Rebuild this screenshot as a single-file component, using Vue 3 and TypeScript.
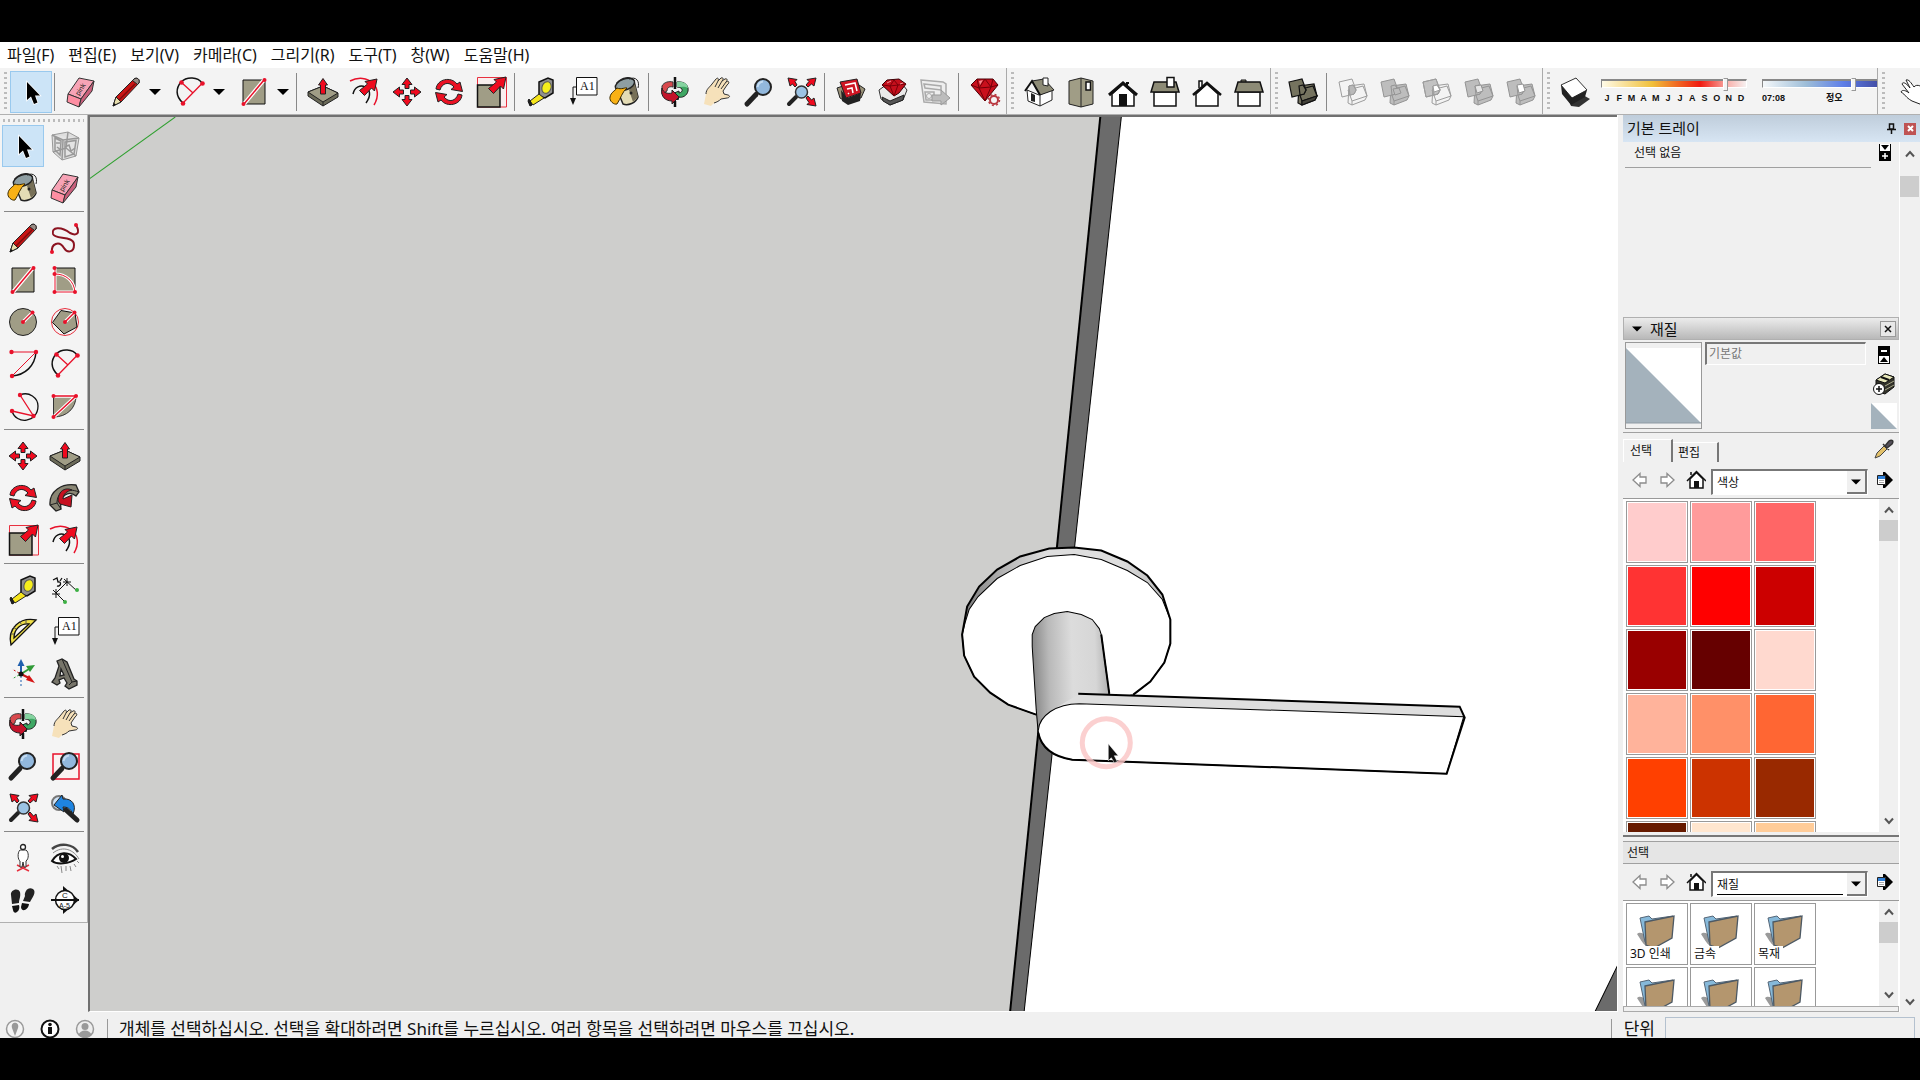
<script setup lang="ts">
import { ref } from 'vue'

interface Tool { icon: string; label: string; active?: boolean; menu?: boolean }

const menus: string[] = ['파일(F)', '편집(E)', '보기(V)', '카메라(C)', '그리기(R)', '도구(T)', '창(W)', '도움말(H)']

const t = (icon: string, label: string, extra: Partial<Tool> = {}): Tool => ({ icon, label, ...extra })

// Each band is a dockable toolbar, each inner list a group between separators.
const bands: Tool[][][] = [
  [
    [t('cursor', '선택', { active: true })],
    [t('eraser', '지우개'), t('pencil', '선', { menu: true }), t('arc2', '호', { menu: true }), t('rect', '직사각형', { menu: true })],
    [t('pushpull', '밀기/끌기'), t('offset', '오프셋'), t('move', '이동'), t('rotate', '회전'), t('scale', '배율')],
    [t('tape', '줄자'), t('label', '텍스트'), t('bucket', '페인트')],
    [t('orbit', '궤도'), t('hand', '이동 보기'), t('zoom', '확대/축소'), t('extents', '범위 확대')],
    [t('warehouse', '3D Warehouse'), t('extwarehouse', 'Extension Warehouse'), t('layout', 'LayOut')],
    [t('ruby', '확장 관리자')],
  ],
  [[t('iso', '등각'), t('top', '평면'), t('front', '정면'), t('right', '오른쪽'), t('back', '뒷면'), t('left', '왼쪽')]],
  [
    [t('shell', '외부 셸')],
    [t('intersect', '교차'), t('union', '결합'), t('subtract', '빼기'), t('trim', '다듬기'), t('split', '분할')],
  ],
]

const palette: Tool[][] = [
  [t('cursor', '선택', { active: true }), t('component', '구성요소'), t('bucket', '페인트'), t('eraser', '지우개')],
  [
    t('pencil', '선'), t('freehand', '자유곡선'), t('rect', '직사각형'), t('rotrect', '회전된 직사각형'), t('circle', '원'),
    t('polygon', '다각형'), t('arc', '호'), t('arc2', '2점 호'), t('arc3', '3점 호'), t('pie', '파이'),
  ],
  [t('move', '이동'), t('pushpull', '밀기/끌기'), t('rotate', '회전'), t('follow', '따라가기'), t('scale', '배율'), t('offset', '오프셋')],
  [t('tape', '줄자'), t('dimension', '치수'), t('protractor', '각도기'), t('label', '텍스트'), t('axes', '축'), t('text3d', '3D 텍스트')],
  [t('orbit', '궤도'), t('hand', '이동 보기'), t('zoom', '확대/축소'), t('zoomwin', '창 확대'), t('extents', '범위 확대'), t('previous', '이전')],
  [t('camera', '카메라 배치'), t('eye', '둘러보기'), t('feet', '걷기'), t('section', '단면')],
]

const months: string[] = [...'JFMAMJJASOND']
const month = ref(87)
const hour = ref(81)
const collection = ref('색상')
const folder = ref('재질')
const materialName = ref('기본값')

const swatches: string[] = [
  '#ffcccc', '#ff9b9b', '#ff6666', '#ff3333', '#ff0000', '#cc0000',
  '#990000', '#660000', '#ffd9cf', '#ffb39b', '#ff9068', '#ff6633',
  '#ff4000', '#cc3300', '#992900', '#661a00', '#ffe6cf', '#ffcc99',
]
const folders: string[] = ['3D 인쇄', '금속', '목재', '', '', '']
</script>

<template>
  <div class="app">
    <svg class="sprite" aria-hidden="true">
      <defs>
        <g id="arrow-up"><path d="M16 2 L21 8.500 H18 V12.500 H14 V8.500 H11 Z" fill="#f00a1e" stroke="#222" /></g>
        <g id="arrow-ne"><path d="M31 1 L28.500 13 L25.500 10 L18.500 17.500 L13.500 12.500 L21.500 6 L19 3.500 Z" fill="#f00a1e" stroke="#222" /></g>
        <g id="lens-big">
          <path d="M4 28 L13 18.500" stroke="#222" stroke-width="5" stroke-linecap="round" />
          <circle cx="20" cy="11" r="8" fill="#92b8dd" stroke="#222" stroke-width="2" />
          <path d="M14.500 11 C15 8 17 6 20 5.500" fill="none" stroke="#c4dcf2" stroke-width="2" />
        </g>
        <g id="boxes">
          <path d="M12 10 L27 8 L30 20 L28 24 L15 29 L11 27 Z" /><path d="M11 14 L26 10 L30 20 L15 25 Z M15 25 V29" />
          <path d="M2 6 L15 3 L19 14 L17 18 L5 21 Z" /><path d="M12 10 L16 9 L19 14 L17 18 L13 19 Z" />
        </g>
      </defs>
      <symbol id="i-cursor" viewBox="0 0 32 32"><path d="M12 6 V24 L16 20.500 L19 28 L22.500 26.500 L20 19.500 H25 Z" fill="#000" stroke="#fff" stroke-width="1.500" paint-order="stroke" /></symbol>
      <symbol id="i-component" viewBox="0 0 32 32">
        <g fill="none" stroke="#999"><path d="M3 5 L19 2 L30 8 L27 26 L13 30 L4 22 Z" fill="#dedede" /><path d="M3 5 L14 10 L30 8 M14 10 L13 30 M6 8 L12 11 L11 25 L6 20 Z M16 12 L27 10.500 L25 24 L16 27 Z" fill="#e4e4e4" stroke-width="1.500" /><path d="M4 22 L17 18 L27 26 M19 2 L17 18 M16 17 L20 15 L22 21 L26 18 M7 13 H11 M8 17 L12 20" stroke-width="1.500" /></g>
      </symbol>
      <symbol id="i-bucket" viewBox="0 0 32 32">
        <path d="M8 7 C13 1 22 0 25 5 L29 21 C27 27 19 30 14 28 L9 16 Z" fill="#e4dcb5" stroke="#222" stroke-width="1.500" />
        <path d="M20 14 L26 8 L29 21 L24 26 Z" fill="#777058" />
        <ellipse cx="16" cy="8.500" rx="10" ry="5.500" transform="rotate(-20 16 8.500)" fill="#8e9ea2" stroke="#222" stroke-width="1.500" />
        <path d="M8 12 C12 14 17 11 18 12 C13 16 12 22 8 28 C5 29 0 25 1 21 C2 16 6 15 8 12 Z" fill="#f9b115" stroke="#3b2a00" />
        <path d="M20 3 C27 0 31 5 29 12" fill="none" stroke="#222" /><circle cx="22" cy="17" r="1.500" fill="#222" />
      </symbol>
      <symbol id="i-eraser" viewBox="0 0 32 32">
        <path d="M14 2 L29 5 L16 23 L3 18 Z" fill="#f7a3b6" stroke="#333" /><path d="M3 18 L16 23 L14 31 L2 26 Z" fill="#fd8ea2" stroke="#333" /><path d="M29 5 L27 15 L14 31 L16 23 Z" fill="#c9607c" stroke="#333" />
        <text x="14" y="20" font-family="Liberation Sans" font-size="7" fill="#222" transform="rotate(-58 14 20)">pink</text>
      </symbol>
      <symbol id="i-pencil" viewBox="0 0 32 32">
        <path d="M3 30 L6 21 L24 3 C27 1 30 3 29 7 L11 26 Z" fill="#c81414" stroke="#222" /><path d="M3 30 L6 21 L11 26 Z" fill="#e8dfae" stroke="#222" /><path d="M3 30 L4 27 L6 28.500 Z" fill="#111" /><path d="M24 3 C27 1 30 3 29 7 L27.500 8.500 L22.500 4.500 Z" fill="#9a8d86" stroke="#222" /><path d="M9 24 L25 8" stroke="#7c0c0c" stroke-width="1.500" />
      </symbol>
      <symbol id="i-freehand" viewBox="0 0 32 32"><path d="M27 3 C32 12 27 14 21 11 C12 4 2 5 4 12 C6 18 25 13 25 23 C25 31 18 31 15 26 C10 18 2 22 3 30" fill="none" stroke="#8c1320" stroke-width="2" /><circle cx="27" cy="3" r="2" fill="#e8112a" /><circle cx="3" cy="30" r="2" fill="#e8112a" /></symbol>
      <symbol id="i-rect" viewBox="0 0 32 32"><path d="M5 4 H27 V28 H5 Z" fill="#a09d86" stroke="#111" /><path d="M6 28 L26 4" stroke="#fff" stroke-width="4" /><path d="M6 28 L26 4" stroke="#e8112a" stroke-width="1.500" /><circle cx="5.500" cy="28" r="2" fill="#e8112a" /><circle cx="26.500" cy="4" r="2" fill="#e8112a" /></symbol>
      <symbol id="i-rotrect" viewBox="0 0 32 32"><path d="M6 4 H26 V28 H6 Z" fill="#a09d86" stroke="#111" /><path d="M6 4 V28 H26 C25 17 17 10 6 10" fill="none" stroke="#fff" stroke-width="3" /><path d="M6 4 V28 H26 C25 17 17 10 6 10" fill="none" stroke="#e8112a" /><g fill="#e8112a"><circle cx="5.500" cy="4" r="2" /><circle cx="5.500" cy="10" r="2" /><circle cx="5.500" cy="28" r="2" /><circle cx="26" cy="28" r="2" /></g></symbol>
      <symbol id="i-circle" viewBox="0 0 32 32"><circle cx="16" cy="16" r="13.500" fill="#a09d86" stroke="#222" /><path d="M16 16 L25 7" stroke="#fff" stroke-width="3.500" /><path d="M16 16 L25 7" stroke="#e8112a" stroke-width="1.500" /><circle cx="16" cy="16" r="2" fill="#e8112a" /><circle cx="25.500" cy="6.500" r="2" fill="#e8112a" /></symbol>
      <symbol id="i-polygon" viewBox="0 0 32 32"><circle cx="16" cy="16" r="13.500" fill="none" stroke="#e8303f" /><path d="M12 4.500 L26 7 L28 21 L15 28 L3.500 16.500 Z" fill="#a09d86" stroke="#111" /><path d="M16 16 L25 7" stroke="#fff" stroke-width="3.500" /><path d="M16 16 L25 7" stroke="#e8112a" stroke-width="1.500" /><circle cx="16" cy="16" r="2" fill="#e8112a" /><circle cx="25.500" cy="6.500" r="2" fill="#e8112a" /></symbol>
      <symbol id="i-arc" viewBox="0 0 32 32"><path d="M29 4 C28 18 18 27 5 28" fill="none" stroke="#111" stroke-width="1.500" /><path d="M4.500 4 H29 L5 28" fill="none" stroke="#e8112a" /><g fill="#e8112a"><circle cx="4.500" cy="4" r="2.200" /><circle cx="29" cy="4" r="2.200" /><circle cx="5" cy="28" r="2.200" /></g></symbol>
      <symbol id="i-arc2" viewBox="0 0 32 32"><path d="M9 27 C1 20 2 12 7 6 C13 0 24 1 28 7" fill="none" stroke="#111" stroke-width="1.500" /><path d="M9 27 L28.500 7 M7.500 6.500 L19 17" fill="none" stroke="#e8112a" stroke-width="1.300" /><g fill="#e8112a"><circle cx="7.500" cy="6.500" r="2.300" /><circle cx="28.500" cy="7.500" r="2.300" /><circle cx="9" cy="27.500" r="2.300" /></g></symbol>
      <symbol id="i-arc3" viewBox="0 0 32 32"><path d="M13 5 C22 1 31 8 31 16 C31 33 9 35 5 21" fill="none" stroke="#111" stroke-width="1.300" /><path d="M13 5 L26.500 26 L5 21" fill="none" stroke="#e8112a" stroke-width="1.300" /><g fill="#e8112a"><circle cx="13" cy="5" r="2.200" /><circle cx="5" cy="21" r="2.200" /><circle cx="26.500" cy="26" r="2.200" /></g></symbol>
      <symbol id="i-pie" viewBox="0 0 32 32"><path d="M4.500 6 H27 C27 18 18 27 4.500 27 Z" fill="#a09d86" stroke="#333" /><path d="M4.500 6 H27 L4.500 27" fill="none" stroke="#fff" stroke-width="3.500" /><path d="M4.500 6 H27 L4.500 27" fill="none" stroke="#e8112a" stroke-width="1.500" /><g fill="#e8112a"><circle cx="4.500" cy="6" r="2" /><circle cx="27" cy="6" r="2" /><circle cx="4.500" cy="27" r="2" /></g></symbol>
      <symbol id="i-move" viewBox="0 0 32 32"><use href="#arrow-up" /><use href="#arrow-up" transform="rotate(90 16 16)" /><use href="#arrow-up" transform="rotate(180 16 16)" /><use href="#arrow-up" transform="rotate(270 16 16)" /></symbol>
      <symbol id="i-pushpull" viewBox="0 0 32 32"><path d="M1 16 L16 10 L31 17 V21 L16 30 L1 20 Z" fill="#6b6a58" stroke="#222" /><path d="M1 16 L16 10 L31 17 L16 26 Z" fill="#a09d86" stroke="#222" /><path d="M16 26 V30" stroke="#222" /><path d="M16 2.500 L20.500 9 H18.500 V18 H13.500 V9 H11.500 Z" fill="#f00a1e" stroke="#222" /></symbol>
      <symbol id="i-rotate" viewBox="0 0 32 32"><g id="rot-half"><path d="M3 13 C4 3 18 0 24 8 L27 6 L29.500 15.500 L18 13.500 L21 11 C16 5 9 7 7 14 Z" fill="#ea1022" stroke="#222" /></g><use href="#rot-half" transform="rotate(180 16 16)" /></symbol>
      <symbol id="i-follow" viewBox="0 0 32 32"><path d="M1 23 C0 9 13 1 27 3 L30 10 L27 14 C20 8 10 13 12 27 L7 29 Z" fill="#8a8775" stroke="#222" stroke-width="1.300" /><path d="M1 23 L8 21 L12 27 M8 21 C8 10 17 5 30 10" fill="none" stroke="#222" /><path d="M9 19 C9 8 17 5 23 8 C18 9 14 12 14 17 L23 13 L22 25 L11 22 Z" fill="#c71020" stroke="#222" /></symbol>
      <symbol id="i-scale" viewBox="0 0 32 32"><path d="M2.500 1.500 H31.500 V31 H2.500 Z" fill="#f9eeee" stroke="#e8303f" /><path d="M2.500 9 H25 V31 H2.500 Z" fill="#a09d86" stroke="#111" stroke-width="1.500" /><use href="#arrow-ne" /></symbol>
      <symbol id="i-offset" viewBox="0 0 32 32"><path d="M1 5 C18 -4 36 11 25 29" fill="none" stroke="#e8112a" stroke-width="1.500" /><path d="M4 18 C7 3 29 11 17 27" fill="none" stroke="#111" stroke-width="1.500" /><use href="#arrow-ne" transform="translate(-3 2)" /></symbol>
      <symbol id="i-tape" viewBox="0 0 32 32"><path d="M14 6 L23 2 L28 4 L28 17 L20 22 L14 20 Z" fill="#8f8f8f" stroke="#111" stroke-width="1.500" /><ellipse cx="21.500" cy="11.500" rx="4.500" ry="6" transform="rotate(20 21.500 11.500)" fill="#f6ee1c" stroke="#555" /><path d="M14 18 L19 22 L8 29 L5 25 Z" fill="#f6e51b" stroke="#222" /><path d="M4 23 L7 29 L5 30 L3 25 Z" fill="#222" stroke="#111" /></symbol>
      <symbol id="i-dimension" viewBox="0 0 32 32"><path d="M7 19 L18 8" stroke="#111" /><path d="M4 16 L16 28 M15 5 L28 17 M3 20 H11 M7 15 V24 M14 8 H22 M18 4 V12" stroke="#111" /><circle cx="16" cy="28" r="2" fill="#3cb043" /><circle cx="28" cy="16" r="2" fill="#3cb043" /><path d="M4 6 L8 4 L9 8 C13 7 12 13 8 12 M11 7 L13 4" fill="none" stroke="#111" stroke-width="1.300" /></symbol>
      <symbol id="i-protractor" viewBox="0 0 32 32"><path fill-rule="evenodd" d="M29 4 L4 29 C0 12 13 1 29 4 Z M22 8 L7 22 C7 13 14 7 22 8 Z" fill="#efdf48" stroke="#111" stroke-width="1.300" /><path d="M7 18 L4 18 M9 13 L6 11 M14 8 L13 5 M19 7 V4" stroke="#555" /></symbol>
      <symbol id="i-label" viewBox="0 0 32 32"><path d="M9.500 1.500 H30 V19 H9.500 Z" fill="#fff" stroke="#111" /><text x="13" y="14" font-family="Liberation Serif" font-size="12" fill="#111">A1</text><path d="M9 11 H6 V26" fill="none" stroke="#111" /><path d="M3 22 H9 L6 29 Z" fill="#111" /></symbol>
      <symbol id="i-axes" viewBox="0 0 32 32"><path d="M14 16 V6" stroke="#1f5fae" stroke-width="2" /><path d="M10.500 8 L14 1 L17.500 8 Z" fill="#1f5fae" /><path d="M14 16 L22 11" stroke="#2f9a36" stroke-width="2" /><path d="M19 8 L28 7 L23 14 Z" fill="#2f9a36" /><path d="M14 16 L22 20" stroke="#c81414" stroke-width="2" /><path d="M22 17 L28 25 L19 22 Z" fill="#d61616" /><path d="M14 18 V28" stroke="#1f5fae" stroke-dasharray="2 2" /><path d="M12 17 L5 21" stroke="#2f9a36" stroke-dasharray="2 2" /><path d="M12 15 L5 11" stroke="#c81414" stroke-dasharray="2 2" /><circle cx="14" cy="16" r="2.500" fill="#111" /></symbol>
      <symbol id="i-text3d" viewBox="0 0 32 32"><path fill-rule="evenodd" d="M8 3 L13 1 L18 4 L25 21 L28 23 V27 L20 31 L16 28 L18 25 L15 20 L10 22 L11 25 L8 27 L3 24 L6 20 L10 8 Z M12 11 L11 18 L15 17 Z" fill="#77756a" stroke="#222" stroke-width="1.300" /><path d="M13 1 L23 24 L28 23 M23 24 L20 27" fill="none" stroke="#222" /></symbol>
      <symbol id="i-orbit" viewBox="0 0 32 32"><path d="M3 10 C5 6 10 5 14 6 V11 C10 10 8 12 8 15 L3 18 Z" fill="#d8494d" stroke="#333" /><path d="M18 6 C26 5 30 10 29 15 C28 20 23 22 20 21 L19 24 L13 18 L20 15 V17 C25 16 24 11 18 11 Z" fill="#3ea763" stroke="#222" /><path d="M18 6 C24 5 29 8 29 12 C26 10 22 11 18 11 Z" fill="#85d3a0" /><path d="M3 12 C4 17 9 18 13 17 V14 L20 21 L13 28 V25 C7 25 1 21 3 12 Z" fill="#c3132a" stroke="#222" /><path d="M16 1 V13 M16 25 V31" stroke="#111" stroke-width="2.500" /></symbol>
      <symbol id="i-hand" viewBox="0 0 32 32"><path d="M3 28 L5 18 C5 13 9 11 11 8 L15 3 C17 1 18 3 17 5 L20 2 C22 1 23 3 21 5 L24 3 C26 2 27 4 25 6 L27 5 C29 5 28 8 26 9 L22 15 L23 18 L27 19 C30 20 28 22 26 22 L20 23 C17 26 13 26 10 30 Z" fill="#f6e1ba" stroke="none" /><path d="M5 18 C5 13 9 11 11 8 L15 3 C17 1 18 3 17 5 L14 11 M17 5 L20 2 C22 1 23 3 21 5 L17 12 M21 5 L24 3 C26 2 27 4 25 6 L20 13 M25 6 C28 4 29 7 26 9 L22 15 L23 18 L27 19 C30 20 28 22 26 22 L20 23 C18 25 16 26 13 27" fill="none" stroke="#333" /></symbol>
      <symbol id="i-zoom" viewBox="0 0 32 32"><use href="#lens-big" /></symbol>
      <symbol id="i-zoomwin" viewBox="0 0 32 32"><path d="M4 4 H30 V29 H4 Z" fill="#faf2f2" stroke="#e8112a" stroke-width="1.500" /><use href="#lens-big" /></symbol>
      <symbol id="i-extents" viewBox="0 0 32 32"><path d="M4 28 L11 21" stroke="#222" stroke-width="4" stroke-linecap="round" /><circle cx="16.500" cy="16" r="6" fill="#9cc3e4" stroke="#333" stroke-width="1.500" /><g fill="#f00a1e" stroke="#222"><path d="M31 2 L29 10 L26.500 8 L23 11 L21 9 L24 5.500 L22 3.500 Z" /><path d="M3 2 L5 10 L7.500 8 L10 11 L12 9 L10 5.500 L12 3.500 Z" /><path d="M31 30 L29 22 L26.500 24 L23 20 L21 22 L24 26.500 L22 28.500 Z" /></g></symbol>
      <symbol id="i-previous" viewBox="0 0 32 32"><circle cx="10" cy="11" r="7" fill="#cfe2f4" stroke="#777" stroke-width="2" /><path d="M17 18 L28 28" stroke="#222" stroke-width="5" stroke-linecap="round" /><path d="M5 13 L13 3 L14 7 C23 6 28 13 24 22 C21 16 18 15 14 15 L15 20 Z" fill="#1f84e0" stroke="#222" /></symbol>
      <symbol id="i-camera" viewBox="0 0 32 32"><path d="M10 29 L22 23 M10 23 L22 29 M16 22 V27" stroke="#e8303f" stroke-width="1.500" /><path d="M13 8 C10 11 11 18 13 19 V25 H15 L16 20 L17 25 H19 V19 C22 17 22 10 19 8 Z" fill="#fff" stroke="#333" /><circle cx="16" cy="5" r="2.500" fill="#fff" stroke="#222" stroke-width="1.300" /></symbol>
      <symbol id="i-eye" viewBox="0 0 32 32"><path d="M3 7 C11 0 24 2 29 10" fill="none" stroke="#444" stroke-width="2.500" /><path d="M3 19 C9 9 20 9 27 17 C20 22 8 23 3 19 Z" fill="#fff" stroke="#111" stroke-width="2" /><circle cx="15" cy="16" r="5" fill="#111" /><circle cx="13.500" cy="14.500" r="1.500" fill="#fff" /><path d="M4 11 C14 3 25 8 30 17 M8 24 L10 27 M12 24 L13 31 M17 24 V29 M21 24 L22 29 M25 22 L27 25 M28 19 L30 21" fill="none" stroke="#888" /></symbol>
      <symbol id="i-feet" viewBox="0 0 32 32"><path d="M4 11 C3 6 11 3 13 8 C14 13 12 15 12 19 L5 20 Z M18 12 C17 8 21 2 26 5 C30 8 25 14 23 18 L16 17 Z" fill="#222" /><path d="M5 22 L12 21 C14 27 7 32 6 26 Z M15 19 L22 20 C21 27 14 28 14 23 Z" fill="#111" /></symbol>
      <symbol id="i-section" viewBox="0 0 32 32"><path d="M14 2 L30 16 L14 30 Z" fill="#111" /><circle cx="16" cy="16" r="9.500" fill="#fff" stroke="#111" stroke-width="1.500" /><path d="M2 16 H30" stroke="#111" stroke-width="2" /><text x="13" y="14" font-family="Liberation Sans" font-size="8" fill="#111">C</text><text x="10" y="24" font-family="Liberation Sans" font-size="7" fill="#111">A-5</text></symbol>
      <symbol id="i-warehouse" viewBox="0 0 32 32"><path d="M2 12 L8 10 L10 25 L5 22 Z M24 9 L30 13 L26 22 L23 22 Z" fill="#9a9279" stroke="#222" /><path d="M6 14 L12 22 L26 17 L25 25 L13 29 L7 25 Z" fill="#222" /><path d="M5 6 L22 3 L26 17 L11 22 Z" fill="#cf1523" stroke="#222" /><path d="M10 9 L20 7 L22 15 M12 13 L17 12 L18 17 M13 17 L14 18" fill="none" stroke="#fff" stroke-width="1.500" /></symbol>
      <symbol id="i-extwarehouse" viewBox="0 0 32 32"><path d="M2 14 L9 9 L26 9 L30 14 L26 24 L13 29 L4 23 Z" fill="#e9e9e9" stroke="#333" /><path d="M5 21 L13 25 L27 19 L26 24 L13 29 L6 25 Z" fill="#555" stroke="#222" /><path d="M5 9 L10 4 L22 3 L29 8 L22 17 L17 20 Z" fill="#c40f1c" stroke="#3a0005" /><path d="M5 9 L13 10 L29 8 M13 10 L17 20 L21 9 L17 4 L13 10" fill="none" stroke="#7a0008" /><path d="M10 7 L14 5 M23 8 L26 7" stroke="#f0969c" /></symbol>
      <symbol id="i-layout" viewBox="0 0 32 32"><path d="M2 4 L24 6 L27 8 V28 L5 26 Z" fill="#eee" stroke="#aaa" stroke-width="1.500" /><path d="M5 8 L22 10 V14 L6 12 Z M6 16 H15 V24 H7 Z" fill="none" stroke="#aaa" stroke-width="1.500" /><circle cx="10" cy="20" r="2.500" fill="none" stroke="#aaa" /><path d="M13 19 H22 V14 L31 22 L22 29 V25 H13 Z" fill="#bcbcbc" stroke="#999" /></symbol>
      <symbol id="i-ruby" viewBox="0 0 32 32"><path d="M2 9 L8 3 H24 L29 9 L16 25 Z" fill="#c90f1c" stroke="#4a0006" /><path d="M2 9 L10 12 L22 11 L29 9 M8 3 L10 12 L16 25 L22 11 L24 3 M10 12 L16 3 L22 11" fill="none" stroke="#720008" /><path d="M10 5 L14 4 L11 9 Z" fill="#f58a90" /><circle cx="25" cy="24" r="4" fill="#f4f4f4" stroke="#b93840" stroke-width="2" /><circle cx="25" cy="24" r="5.500" fill="none" stroke="#b93840" stroke-width="1.500" stroke-dasharray="2 2.300" /></symbol>
      <symbol id="i-iso" viewBox="0 0 32 32"><path d="M4 14 L16 19 L29 14 V24 L17 30 L5 25 Z" fill="#fff" stroke="#222" /><path d="M17 19 V30" stroke="#222" /><path d="M8 17 L12 19 V26 L8 25 Z" fill="#222" /><path d="M9 5 L21 3 L31 14 L17 19 Z" fill="#8d8b76" stroke="#222" /><path d="M2 15 L9 5 L17 19" fill="none" stroke="#111" stroke-width="2" /><path d="M20 9 V2 H25 V10 Z" fill="#fff" stroke="#222" /></symbol>
      <symbol id="i-top" viewBox="0 0 32 32"><path d="M4 5 L16 2 L28 5 V28 L16 31 L4 28 Z" fill="#a09d86" stroke="#222" /><path d="M16 2 V31" stroke="#222" /><path d="M21 6 H25.500 V14 H21 Z" fill="#fff" stroke="#111" stroke-width="1.500" /></symbol>
      <symbol id="i-front" viewBox="0 0 32 32"><path d="M20 12 V7 H22" fill="none" stroke="#111" stroke-width="2" /><path d="M5 18 V30 H27 V18 L16 8 Z" fill="#fff" stroke="#111" stroke-width="1.500" /><path d="M2 19 L16 7 L30 19" fill="none" stroke="#111" stroke-width="3" /><path d="M12 18 H20 V30 H12 Z" fill="#111" /></symbol>
      <symbol id="i-right" viewBox="0 0 32 32"><path d="M5 16 H27 V30 H5 Z" fill="#fff" stroke="#111" stroke-width="1.500" /><path d="M5 6 H27 L30 16 H2 Z" fill="#8d8b76" stroke="#111" stroke-width="1.500" /><path d="M18 1.500 H25 V11 H18 Z" fill="#fff" stroke="#111" stroke-width="1.500" /></symbol>
      <symbol id="i-back" viewBox="0 0 32 32"><path d="M8 12 V5 H11 V10" fill="#fff" stroke="#111" stroke-width="1.500" /><path d="M5 18 V30 H27 V18 L16 8 Z" fill="#fff" stroke="#111" stroke-width="1.500" /><path d="M2 19 L16 7 L30 19" fill="none" stroke="#111" stroke-width="2.500" /></symbol>
      <symbol id="i-left" viewBox="0 0 32 32"><path d="M8 6 V4 H13 V6" fill="#8d8b76" stroke="#111" /><path d="M5 16 H27 V30 H5 Z" fill="#fff" stroke="#111" stroke-width="1.500" /><path d="M5 6 H27 L30 16 H2 Z" fill="#8d8b76" stroke="#111" stroke-width="1.500" /></symbol>
      <symbol id="i-shell" viewBox="0 0 32 32"><g fill="#75735f" stroke="#111" stroke-width="1.200"><use href="#boxes" /><path d="M15 25 L30 20 L28 24 L15 29 Z" fill="#44433a" /></g></symbol>
      <symbol id="i-intersect" viewBox="0 0 32 32"><g fill="none" stroke="#9d9d9d"><use href="#boxes" /><path d="M12 10 L16 9 L19 14 L17 18 L13 19 Z" fill="#b9b9b9" /></g></symbol>
      <symbol id="i-union" viewBox="0 0 32 32"><g fill="#bdbdbd" stroke="#949494"><use href="#boxes" /><path d="M14 13 L20 12 L22 17 L16 19 Z" /></g></symbol>
      <symbol id="i-subtract" viewBox="0 0 32 32"><g stroke="#9d9d9d"><path d="M2 6 L15 3 L19 14 L17 18 L5 21 Z" fill="#c2c2c2" /><g fill="none"><use href="#boxes" /></g><path d="M12 10 L16 9 L19 14 L13 16 Z" fill="#fff" /></g></symbol>
      <symbol id="i-trim" viewBox="0 0 32 32"><g fill="#bdbdbd" stroke="#949494"><use href="#boxes" /><path d="M12 10 L18 9 L20 15 L14 17 Z" fill="#e6e6e6" /></g></symbol>
      <symbol id="i-split" viewBox="0 0 32 32"><g fill="#bdbdbd" stroke="#949494"><use href="#boxes" /><path d="M12 9 L18 8 L20 15 L14 17 Z" fill="#fff" /></g></symbol>
      <symbol id="i-shadow" viewBox="0 0 32 32"><path d="M8 20 L12 30 L20 31 L31 23 L24 19 Z" fill="#333" /><path d="M2 9 L17 2 L28 14 L13 22 Z" fill="#fff" stroke="#333" /><path d="M2 9 L13 22 L12 29 L3 18 Z M13 22 L28 14 L26 21 L12 29 Z" fill="#222" /></symbol>
      <symbol id="i-point" viewBox="0 0 32 32"><path d="M12 25 C5 21 6 19 1 16 C2 13 7 15 9 17 L2 8 C3 5 7 8 10 12 L6 4 C9 3 11 7 14 11 C17 7 23 11 25 14 V30 L12 25" fill="#fff" stroke="#222" /></symbol>
      <symbol id="i-home" viewBox="0 0 20 20"><path d="M4 9 V18 H17 V9 L10.500 2.500 Z" fill="#fff" stroke="#111" stroke-width="1.500" /><path d="M1 11 L10.500 1.500 L20 11 M5 5 V2" fill="none" stroke="#111" stroke-width="1.500" /><path d="M8 11 H13 V18 H8 Z" fill="#111" /></symbol>
      <symbol id="i-prev" viewBox="0 0 16 16"><path d="M1 8 L8 1.500 V5 H14 V11 H8 V14.500 Z" fill="#fff" stroke="#8c8c8c" stroke-width="1.300" /></symbol>
      <symbol id="i-details" viewBox="0 0 18 18"><path d="M7 1 H9 L17 9 L9 17 H7 Z" fill="#000" /><path d="M1.500 4.500 H9.500 V13.500 H1.500 Z" fill="#fff" stroke="#222" /><path d="M2 5 H9 V8 H2 Z" fill="#2f80d8" /><path d="M3 9.500 H8 M3 11.500 H8" stroke="#aaa" /></symbol>
      <symbol id="i-dropper" viewBox="0 0 20 20"><path d="M1 19 L3 14 L10 7 L13 10 L6 17 Z" fill="#e3c16a" stroke="#444" /><path d="M9 5 L15 11 M11 7 L15 2 C18 0 20 2 18 5 L13 9 Z" fill="#55505a" stroke="#333" stroke-width="1.500" /></symbol>
      <symbol id="i-create" viewBox="0 0 22 22"><path d="M3 7 L12 1 L21 4 V14 L12 21 L3 18 Z" fill="#33332b" stroke="#111" /><path d="M3 7 L12 1 L21 4 L12 10 Z" fill="#e6e6b8" stroke="#111" /><path d="M8 4 L16 7" stroke="#111" stroke-width="2" /><path d="M12 13 L21 8 M12 17 L21 12" stroke="#aaa98a" /><circle cx="6" cy="16" r="5.500" fill="#fff" stroke="#111" /><path d="M6 13 V19 M3 16 H9" stroke="#111" stroke-width="1.500" /></symbol>
      <symbol id="i-folder" viewBox="0 0 40 36"><path d="M1 20 C4 17 8 20 10 22 V32 C6 29 4 24 1 20 Z" fill="#9a9a9a" /><path d="M4 4 L13 2 L16 5 L37 2 L12 31 L9 28 Z" fill="#86b9da" stroke="#567" /><path d="M9 8 L38 2 L36 24 L18 34 L10 31 Z" fill="#b4966e" stroke="#4d5964" stroke-width="1.300" /></symbol>
      <symbol id="i-chev" viewBox="0 0 10 8"><path d="M1 6.500 L5 2 L9 6.500" fill="none" stroke="#555" stroke-width="2" /></symbol>
      <symbol id="i-down" viewBox="0 0 12 8"><path d="M0 1 H12 L6 7 Z" fill="#000" /></symbol>
    </svg>

    <nav class="menubar">
      <button v-for="m in menus" :key="m" type="button" class="menu">{{ m }}</button>
    </nav>

    <header class="toolbar">
      <div v-for="(band, b) in bands" :key="b" class="band">
        <i class="grip"></i>
        <template v-for="(group, g) in band" :key="g">
          <i v-if="g > 0" class="sep"></i>
          <template v-for="tool in group" :key="tool.icon">
            <span v-if="tool.menu" class="split">
              <button type="button" class="tool" :aria-label="tool.label"><svg class="icon"><use :href="'#i-' + tool.icon" /></svg></button>
              <button type="button" class="drop" :aria-label="tool.label + ' 메뉴'"><svg class="tri"><use href="#i-down" /></svg></button>
            </span>
            <button v-else type="button" class="tool" :class="{ active: tool.active }" :aria-label="tool.label"><svg class="icon"><use :href="'#i-' + tool.icon" /></svg></button>
          </template>
        </template>
      </div>
      <div class="band">
        <i class="grip"></i>
        <button type="button" class="tool" aria-label="그림자"><svg class="icon"><use href="#i-shadow" /></svg></button>
        <div class="slider date">
          <input v-model="month" type="range" min="0" max="100" aria-label="날짜" />
          <div class="ticks"><span v-for="(m, i) in months" :key="i">{{ m }}</span></div>
        </div>
        <div class="slider time">
          <input v-model="hour" type="range" min="0" max="100" aria-label="시간" />
          <div class="hours"><span>07:08</span><span>정오</span></div>
        </div>
      </div>
      <div class="band last">
        <i class="grip"></i>
        <button type="button" class="tool" aria-label="상호 작용"><svg class="icon"><use href="#i-point" /></svg></button>
      </div>
    </header>

    <div class="work">
      <aside class="left">
        <div class="palette">
          <i class="hgrip"></i>
          <template v-for="(group, g) in palette" :key="g">
            <i v-if="g > 0" class="hsep"></i>
            <div class="group">
              <button v-for="tool in group" :key="tool.icon" type="button" class="tool" :class="{ active: tool.active }" :aria-label="tool.label"><svg class="icon"><use :href="'#i-' + tool.icon" /></svg></button>
            </div>
          </template>
        </div>
      </aside>

      <main class="viewport">
        <svg class="scene" viewBox="90 118 1527 893" preserveAspectRatio="xMidYMid slice">
          <defs>
            <linearGradient id="stalk" x1="0" x2="1" y1="0.050" y2="0"><stop offset="0" stop-color="#8a8a8a" /><stop offset="0.200" stop-color="#b9b9b9" /><stop offset="0.500" stop-color="#dcdcdc" /><stop offset="0.800" stop-color="#d6d6d6" /><stop offset="1" stop-color="#a9a9a9" /></linearGradient>
            <linearGradient id="rim" x1="0" x2="1"><stop offset="0" stop-color="#777" /><stop offset="0.200" stop-color="#b5b5b5" /><stop offset="0.400" stop-color="#dedede" /><stop offset="0.750" stop-color="#dedede" /><stop offset="1" stop-color="#b8b8b8" /></linearGradient>
          </defs>
          <rect x="90" y="118" width="1527" height="893" fill="#fff" />
          <path d="M90 118 H1100 L1010 1011 H90 Z" fill="#cececc" />
          <path d="M1100 118 H1121 L1024 1011 H1010 Z" fill="#6b6b6b" />
          <path d="M1100 118 L1010 1011" stroke="#000" stroke-width="2" />
          <path d="M1121 118 L1024 1011" stroke="#000" stroke-width="1" />
          <path d="M90 180 L176 118" stroke="#2fa02f" stroke-width="1" />
          <path d="M1618 963 L1594 1012 H1618 Z" fill="#6b6b6b" stroke="#000" />
          <path d="M1049 549 L1074 548 L1101 551 L1127 562 L1147 576 L1162 595 L1170 620 V644 L1164 663 L1150 682 L1133 695 L1036 715 L1008 705 L990 693 L974 677 L964 656 L962 635 L967 607 L979 587 L997 570 L1020 557 Z" fill="url(#rim)" />
          <path d="M1170 620 V644 L1164 663 L1150 682 L1133 695 L1036 715 L1008 705 L990 693 L974 677 L964 656 L962 635 L965 623 L969 610 L978 597 L997 579 L1020 566 L1047 557 L1074 555 L1101 560 L1127 571 L1147 583 L1162 600 Z" fill="#fff" stroke="#000" stroke-width="1" />
          <path d="M1133 695 L1150 682 L1164 663 L1170 644 V620 L1162 595 L1147 576 L1127 562 L1101 551 L1074 548 L1049 549 L1020 557 L997 570 L979 587 L967 607 L962 635 L964 656 L974 677 L990 693 L1008 705 L1036 715" fill="none" stroke="#000" stroke-width="2" />
          <path d="M1038 733 L1036 710 L1032 647 V635 L1035 627 L1044 618 L1054 614 L1067 612 L1081 615 L1092 620 L1099 629 L1101 635 L1109 694 L1079 710 Z" fill="url(#stalk)" stroke="#000" stroke-width="1" />
          <path d="M1101 635 L1109 694" fill="none" stroke="#000" stroke-width="2" />
          <path d="M1079 694 L1459 707 L1464 719 L1079 705 L1056 708 Z" fill="#dedede" />
          <path d="M1079 704 L1463 717 L1446 774 L1072 760 C1060 758 1040 752 1038 731 C1039 716 1056 704 1079 704 Z" fill="#fff" stroke="#000" stroke-width="1" />
          <path d="M1078 694 L1459 707 L1464 718 L1446 774 L1072 760 C1060 758 1042 752 1038 733" fill="none" stroke="#000" stroke-width="2" />
          <circle cx="1106" cy="743" r="24" fill="none" stroke="#fac4c4" stroke-opacity="0.800" stroke-width="5" />
          <path d="M1108 744 V761 L1111 758 L1114 763 L1117 762 L1114 756 H1118 Z" fill="#111" stroke="#fff" stroke-width="0.500" />
        </svg>
      </main>

      <aside class="tray">
        <div class="tray-title">
          <h2>기본 트레이</h2>
          <button type="button" class="pin" aria-label="고정"><svg width="9" height="11" viewBox="0 0 9 11"><path d="M2.500 1 H6.500 V6 H2.500 Z M0 6.500 H9 M4.500 7 V11" fill="none" stroke="#111" stroke-width="1.500" /></svg></button>
          <button type="button" class="close" aria-label="닫기"><svg width="7" height="7" viewBox="0 0 7 7"><path d="M1 1 L6 6 M6 1 L1 6" stroke="#fff" stroke-width="2" /></svg></button>
        </div>
        <div class="tray-body">
          <div class="panels">
            <section class="entity">
              <p>선택 없음</p>
              <button type="button" class="toggle" aria-label="세부정보"><svg width="12" height="17" viewBox="0 0 12 17"><path d="M0 0 H12 V17 H0 Z" fill="#000" /><path d="M1 0 H11 V7 H1 Z" fill="#fff" /><path d="M2 1 H10 L6 6 Z" fill="#000" /><path d="M6 9 V15 M3 12 H9" stroke="#fff" stroke-width="1.500" /></svg></button>
            </section>

            <div class="panel-title">
              <svg class="tri"><use href="#i-down" /></svg>
              <h3>재질</h3>
              <button type="button" aria-label="재질 닫기"><svg width="8" height="8" viewBox="0 0 8 8"><path d="M1 1 L7 7 M7 1 L1 7" stroke="#111" stroke-width="1.500" /></svg></button>
            </div>

            <section class="material">
              <svg class="preview" viewBox="0 0 75 85" preserveAspectRatio="none"><path d="M0 0 H75 V85 H0 Z" fill="#f0f0f0" /><path d="M0 5 H75 V80 H0 Z" fill="#fff" /><path d="M0 5 L75 80 H0 Z" fill="#a4b2bc" /><path d="M0 80 H75" stroke="#8e9aa3" /></svg>
              <input v-model="materialName" type="text" disabled aria-label="재질 이름" />
              <div class="side">
                <button type="button" aria-label="보조 창"><svg width="12" height="18" viewBox="0 0 12 18"><path d="M0 0 H12 V18 H0 Z" fill="#000" /><path d="M1 10 H11 V17 H1 Z" fill="#fff" /><path d="M2 16 H10 L6 11 Z" fill="#000" /><path d="M3 5 H9" stroke="#fff" stroke-width="2" /></svg></button>
                <button type="button" aria-label="재질 만들기"><svg width="22" height="22"><use href="#i-create" /></svg></button>
                <button type="button" aria-label="기본 재질"><svg width="26" height="26" viewBox="0 0 26 26"><path d="M0 0 H26 V26 H0 Z" fill="#fff" /><path d="M0 0 L26 26 H0 Z" fill="#a4b2bc" /></svg></button>
              </div>
            </section>

            <div class="tabs">
              <button type="button" class="tab on">선택</button>
              <button type="button" class="tab">편집</button>
              <button type="button" class="dropper" aria-label="샘플 페인트"><svg width="20" height="20"><use href="#i-dropper" /></svg></button>
            </div>

            <div class="nav">
              <button type="button" aria-label="뒤로"><svg width="16" height="16"><use href="#i-prev" /></svg></button>
              <button type="button" aria-label="앞으로"><svg class="flip" width="16" height="16"><use href="#i-prev" /></svg></button>
              <button type="button" aria-label="모델"><svg width="20" height="20"><use href="#i-home" /></svg></button>
              <label class="combo">
                <select v-model="collection" aria-label="재질 모음"><option>색상</option><option>재질</option></select>
                <span><svg class="tri"><use href="#i-down" /></svg></span>
              </label>
              <button type="button" aria-label="세부정보"><svg width="18" height="18"><use href="#i-details" /></svg></button>
            </div>

            <div class="list colors">
              <div class="cells">
                <button v-for="c in swatches" :key="c" type="button" class="cell" :aria-label="c" :style="{ backgroundColor: c }"></button>
              </div>
              <div class="scroll"><svg class="chev"><use href="#i-chev" /></svg><i></i><svg class="chev flipy"><use href="#i-chev" /></svg></div>
            </div>

            <div class="splitter"></div>
            <h3 class="sub">선택</h3>

            <div class="nav">
              <button type="button" aria-label="뒤로"><svg width="16" height="16"><use href="#i-prev" /></svg></button>
              <button type="button" aria-label="앞으로"><svg class="flip" width="16" height="16"><use href="#i-prev" /></svg></button>
              <button type="button" aria-label="모델"><svg width="20" height="20"><use href="#i-home" /></svg></button>
              <label class="combo lined">
                <select v-model="folder" aria-label="폴더"><option>재질</option><option>색상</option></select>
                <span><svg class="tri"><use href="#i-down" /></svg></span>
              </label>
              <button type="button" aria-label="세부정보"><svg width="18" height="18"><use href="#i-details" /></svg></button>
            </div>

            <div class="list folders">
              <div class="cells">
                <button v-for="(f, i) in folders" :key="i" type="button" class="cell folder" :aria-label="f || '폴더'"><svg><use href="#i-folder" /></svg><span v-if="f">{{ f }}</span></button>
              </div>
              <div class="scroll"><svg class="chev"><use href="#i-chev" /></svg><i></i><svg class="chev flipy"><use href="#i-chev" /></svg></div>
            </div>
            <div class="foot"></div>
          </div>
          <div class="scroll outer"><svg class="chev"><use href="#i-chev" /></svg><i></i><svg class="chev flipy"><use href="#i-chev" /></svg></div>
        </div>
      </aside>
    </div>

    <footer class="status">
      <svg class="badge" viewBox="0 0 20 20"><circle cx="10" cy="10" r="8.500" fill="#f4f4f4" stroke="#999" stroke-width="1.500" /><path d="M10 17 L7 9 C5 2 15 2 13 9 Z" fill="#999" /></svg>
      <svg class="badge" viewBox="0 0 20 20"><circle cx="10" cy="10" r="8.500" fill="#fff" stroke="#111" stroke-width="2" /><circle cx="10" cy="5.500" r="1.800" fill="#111" /><path d="M8 8 H12 V15 H8 Z" fill="#111" /></svg>
      <svg class="badge" viewBox="0 0 20 20"><circle cx="10" cy="10" r="8.500" fill="#eee" stroke="#999" stroke-width="1.500" /><circle cx="10" cy="7.500" r="3.500" fill="#999" /><path d="M3.500 16 C5 10 15 10 16.500 16 C13 19 7 19 3.500 16 Z" fill="#999" /></svg>
      <p>개체를 선택하십시오. 선택을 확대하려면 Shift를 누르십시오. 여러 항목을 선택하려면 마우스를 끄십시오.</p>
      <label for="vcb">단위</label>
      <input id="vcb" type="text" />
    </footer>
  </div>
</template>

<style>
body { margin: 0; background: #000; }
</style>

<style scoped>
.app {
  display: flex; flex-direction: column; box-sizing: border-box; height: 100vh; padding: 42px 0;
  background: #000; color: #111; overflow: hidden;
  font-family: "Noto Sans", "Noto Sans CJK KR", sans-serif; font-size: 12px;
}
button { margin: 0; padding: 0; border: 0; background: none; color: inherit; font: inherit; }
svg { display: block; }
.sprite { display: none; }
h2, h3, p { margin: 0; font-weight: 400; }

.menubar { display: flex; flex: none; gap: 14px; height: 26px; padding: 0 7px; background: #fff; overflow: hidden; }
.menu { font-size: 16px; line-height: 26px; white-space: nowrap; }

.toolbar { display: flex; flex: none; height: 46px; border-bottom: 1px solid #b0b0b0; background: #f3f3f3; overflow: hidden; }
.band { display: flex; flex: none; align-items: center; padding-top: 2px; border-right: 1px solid #aaa; }
.grip { flex: none; width: 3px; height: 40px; margin: 0 4px; background: repeating-linear-gradient(#bbb 0 2px, transparent 2px 5px); }
.band:first-child .grip { margin-right: 3px; }
.last .tool { margin-left: 6px; }
.sep { flex: none; width: 1px; height: 38px; margin: 0 5px 0 2px; background: #888; }
.tool { display: grid; flex: none; place-items: center; width: 42px; height: 42px; }
.tool.active { background: #cce4f7; box-shadow: inset 0 0 0 1px #99c9ee; }
.icon { width: 32px; height: 32px; }
.split { display: flex; flex: none; padding: 0 3px; }
.drop { display: grid; place-items: center; width: 16px; }
.tri { width: 12px; height: 8px; }

.slider { flex: none; height: 34px; padding-top: 4px; box-sizing: border-box; font: bold 9px/12px "Liberation Sans", "Noto Sans CJK KR", sans-serif; }
.date { width: 146px; margin: 0 15px 0 5px; }
.time { width: 115px; }
.slider input {
  appearance: none; display: block; box-sizing: border-box; width: 100%; height: 9px; margin: 0 0 4px;
  border: 1px solid #fff; border-top: 2px solid #888; border-left: 1px solid #888;
}
.date input { background: linear-gradient(90deg, #fffbe8, #f0bf38 35%, #f01a10 68%, #f9b5b0 88%, #f6f0f0); }
.time input { border-right: 0; background: linear-gradient(90deg, #f5f8fa, #9dbdd8 38%, #5f7fe8 70%, #4450a8); }
.slider input::-webkit-slider-thumb { appearance: none; width: 5px; height: 13px; border: 1px solid #999; border-left-color: #fff; background: #f4f4f4; }
.ticks { display: flex; }
.ticks span { flex: 1; text-align: center; }
.hours { display: flex; gap: 41px; }

.work { display: flex; flex: 1; min-height: 0; background: #f0f0f0; }
.left { flex: none; width: 88px; }
.palette { padding: 4px 1px 1px 2px; border-right: 1px solid #b0b0b0; border-bottom: 1px solid #b0b0b0; background: #f4f4f4; }
.hgrip { display: block; height: 3px; margin: 0 2px 3px 1px; background: repeating-linear-gradient(90deg, #bbb 0 2px, transparent 2px 5px); }
.hsep { display: block; height: 1px; margin: 2px 2px 5px; background: #888; }
.group { display: grid; grid-template-columns: 42px 42px; }
.viewport { flex: 1; min-width: 0; border-top: 2px solid #707070; border-left: 2px solid #707070; border-bottom: 1px solid #fff; }
.scene { width: 100%; height: 100%; }

.tray { display: flex; flex: none; flex-direction: column; box-sizing: border-box; width: 303px; padding-left: 5px; border-left: 1px solid #fff; }
.tray-title { display: flex; flex: none; align-items: center; height: 27px; padding: 0 4px; background: linear-gradient(#bfcddb, #d7e5f3); }
.tray-title h2 { flex: 1; font-size: 15px; line-height: 27px; }
.pin { margin-right: 8px; }
.close { display: grid; place-items: center; width: 12px; height: 12px; background: #bf5353; }
.tray-body { display: flex; flex: 1; min-height: 0; }
.panels { display: flex; flex: 1; flex-direction: column; min-width: 0; border-right: 1px solid #fff; }
.entity { display: flex; flex: none; align-items: flex-start; gap: 8px; height: 175px; padding-left: 2px; }
.entity p { flex: 1; height: 25px; padding-left: 9px; border-bottom: 1px solid #a0a0a0; line-height: 21px; }
.toggle { margin: 2px 8px 0 0; }

.panel-title { display: flex; flex: none; align-items: center; box-sizing: border-box; height: 23px; padding: 0 2px 0 8px; border: 1px solid #b0b0b0; background: linear-gradient(#ececec, #b8b8b8); }
.panel-title .tri { width: 10px; }
.panel-title h3 { flex: 1; padding-left: 8px; font-size: 15px; line-height: 20px; }
.panel-title button { display: grid; place-items: center; box-sizing: border-box; width: 16px; height: 16px; border: 1px solid #999; background: #e8e8e8; }

.material { display: flex; flex: none; box-sizing: border-box; height: 93px; padding: 2px 2px 0; border-bottom: 1px solid #a0a0a0; }
.preview { flex: none; width: 75px; height: 85px; border: 1px solid #999; }
.material input {
  flex: 1; box-sizing: border-box; min-width: 0; height: 23px; margin: 0 5px 0 3px; padding: 0 2px 2px;
  border: 1px solid #fff; border-top: 2px solid #777; border-left: 2px solid #777; background: #f0f0f0; color: #777; font: inherit;
}
.side { display: flex; flex: none; flex-direction: column; align-items: center; justify-content: space-between; width: 26px; height: 83px; padding-top: 4px; }

.tabs { display: flex; flex: none; align-items: flex-end; height: 29px; }
.tab { box-sizing: border-box; width: 46px; height: 20px; padding-left: 5px; border-top: 1px solid #fff; border-right: 2px solid #777; line-height: 18px; text-align: left; }
.tab.on { width: 50px; height: 23px; padding-left: 6px; border-left: 1px solid #fff; line-height: 20px; }
.dropper { margin: 0 5px 3px auto; }

.nav { display: flex; flex: none; align-items: center; height: 36px; padding: 0 4px 0 9px; }
.nav > button { display: grid; flex: none; place-items: center; width: 20px; height: 24px; }
.nav > button:nth-child(-n + 2) { width: 16px; margin-right: 11px; }
.nav > button:nth-child(3) { margin-right: 5px; }
.flip { transform: scaleX(-1); }
.combo { position: relative; flex: 1; margin: 4px 7px 0 0; }
.combo select {
  appearance: none; display: block; box-sizing: border-box; width: 100%; height: 26px; padding: 0 24px 0 4px;
  border: 1px solid #fff; border-top: 2px solid #777; border-left: 2px solid #777; border-radius: 0; background: #fff; color: #111; font: inherit;
}
.combo span { position: absolute; top: 2px; right: 1px; display: grid; place-items: center; box-sizing: border-box; width: 20px; height: 23px; border-right: 2px solid #777; border-bottom: 2px solid #777; background: #f0f0f0; pointer-events: none; }
.combo .tri { width: 10px; }
.lined::after { content: ""; position: absolute; right: 25px; bottom: 2px; left: 6px; border-bottom: 1px solid #000; }

.list { display: flex; box-sizing: border-box; min-height: 0; border-top: 1px solid #999; background: #fff; overflow: hidden; }
.colors { flex: 1; }
.folders { flex: none; height: 106px; }
.cells { display: grid; flex: 1; grid-template-columns: repeat(3, 62px); grid-auto-rows: 62px; gap: 2px; align-content: start; padding: 2px 3px; overflow: hidden; }
.cell { box-sizing: border-box; border: 1px solid #999; box-shadow: inset 0 0 0 1px #fff; }
.folder { position: relative; display: flex; align-items: flex-start; padding: 10px 0 0 9px; text-align: left; }
.folder svg { width: 40px; height: 36px; }
.folder span { position: absolute; bottom: 2px; left: 0; padding: 0 3px; background: #fff; line-height: 16px; }
.scroll { display: flex; flex: none; flex-direction: column; align-items: center; width: 19px; margin-right: 1px; padding: 7px 0; background: #f0f0f0; }
.scroll i { width: 19px; height: 21px; margin: 6px 0 auto; background: #cdcdcd; }
.chev { flex: none; width: 10px; height: 8px; }
.flipy { transform: scaleY(-1); }
.outer { padding: 8px 0 6px; }
.outer i { margin-top: 18px; }
.splitter { flex: none; box-sizing: border-box; height: 9px; border-top: 3px solid #f0f0f0; background: linear-gradient(#777 2px, #f0f0f0 2px); }
.sub { flex: none; box-sizing: border-box; height: 23px; padding-left: 4px; border-top: 1px solid #a0a0a0; border-bottom: 1px solid #a0a0a0; background: #e5e5e5; font-size: 12px; line-height: 21px; }
.foot { flex: none; box-sizing: border-box; height: 6px; border: 1px solid #aaa; }

.status { display: flex; flex: none; box-sizing: border-box; height: 26px; padding: 5px; padding-bottom: 0; background: #f0f0f0; overflow: hidden; }
.badge { flex: none; width: 20px; height: 20px; margin: 2px 15px 0 0; }
.badge:nth-child(3) { margin-right: 12px; }
.status p { flex: 1; min-width: 0; height: 19px; padding-left: 11px; margin-top: 2px; border-left: 1px solid #999; border-right: 1px solid #999; font-size: 17px; line-height: 20px; white-space: nowrap; }
.status label { padding: 0 10px 0 12px; font-size: 17px; line-height: 23px; }
.status input { box-sizing: border-box; width: 250px; height: 30px; border: 1px solid #b4c1cf; background: #f0f0f0; font: inherit; }
</style>
